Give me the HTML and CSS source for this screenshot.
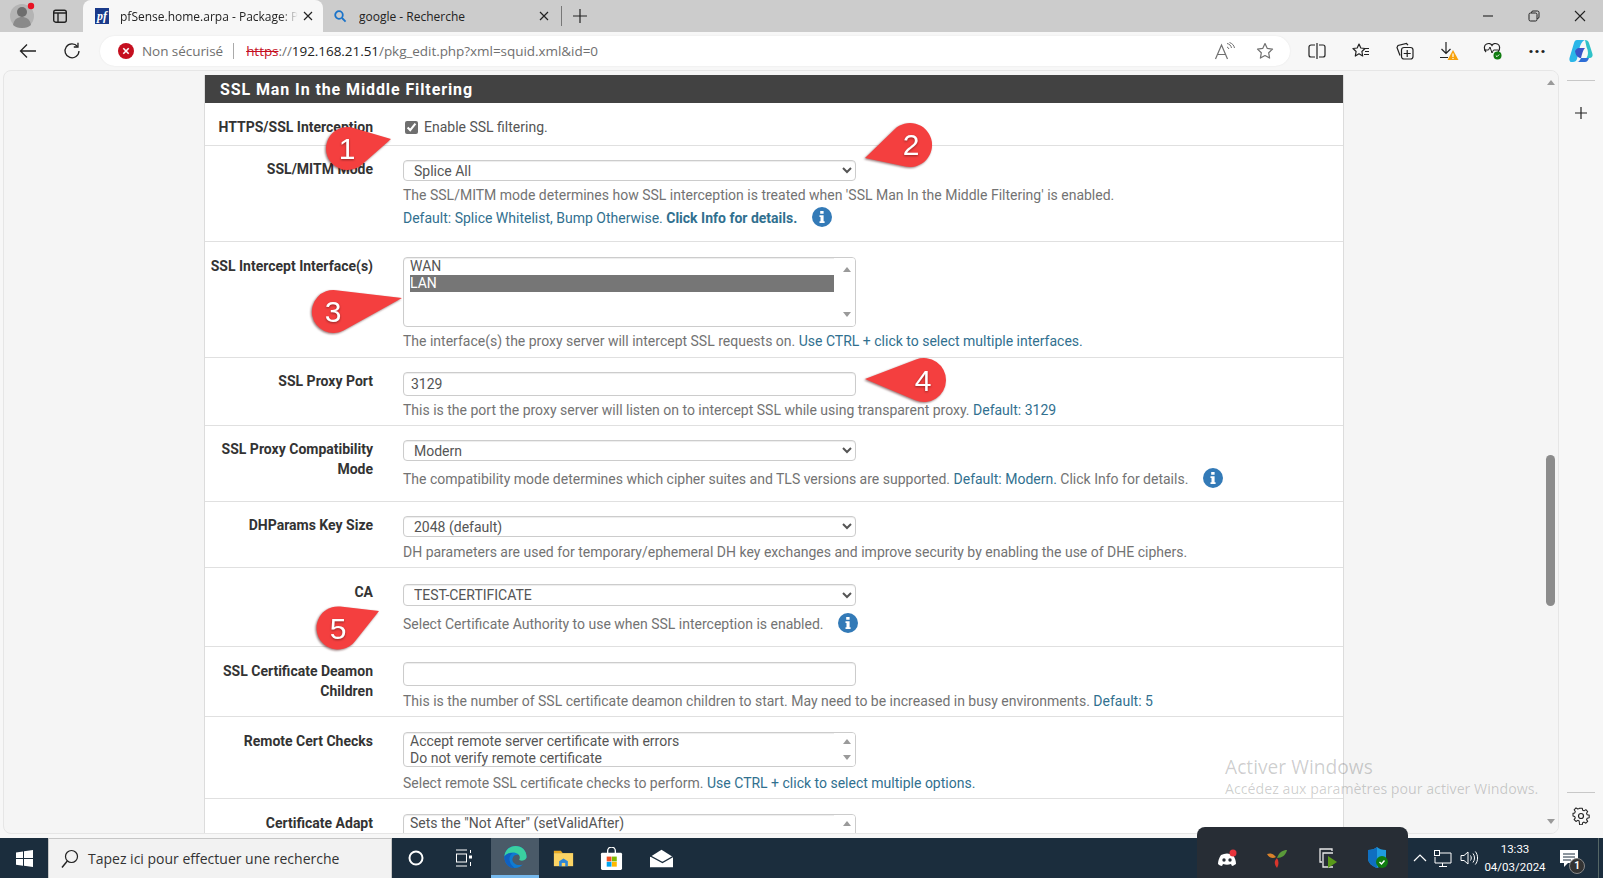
FILE: index.html
```html
<!DOCTYPE html>
<html lang="fr">
<head>
  <meta charset="UTF-8">
  <title>pfSense.home.arpa - Package: Proxy Server</title>
  <link rel="stylesheet" href="styles.css">
</head>
<body>
  <!-- Browser tabs -->
  <header class="tabstrip">
    <span class="strip-btn avatar">
      <svg width="28" height="28" viewBox="0 0 28 28"><circle cx="13" cy="14" r="12" fill="#b4b4b4"/><circle cx="13" cy="10" r="5" fill="#6e6e6e"/><path d="M4 23c1-6 5-8 9-8s8 2 9 8c-2 2-5 3-9 3s-7-1-9-3z" fill="#8a8a8a"/><circle cx="22" cy="4" r="3.2" fill="#e81123"/></svg>
    </span>
    <span class="strip-btn tabs-btn">
      <svg width="16" height="16" viewBox="0 0 16 16"><rect x="1.7" y="2.2" width="12.6" height="12" rx="2" fill="none" stroke="#222" stroke-width="1.4"/><path d="M1.7 5h12.6M6 5v9" stroke="#222" stroke-width="1.4"/></svg>
    </span>
    <div class="tab tab-active">
      <span class="favicon-pf">pf</span>
      <span class="tab-title">pfSense.home.arpa - Package: Proxy Server</span>
      <svg class="tab-close" width="10" height="10" viewBox="0 0 10 10"><path d="M1 1l8 8M9 1l-8 8" stroke="#222" stroke-width="1.2"/></svg>
    </div>
    <div class="tab tab-other">
      <svg width="14" height="14" viewBox="0 0 14 14"><circle cx="6" cy="6" r="3.8" fill="none" stroke="#1a73c9" stroke-width="1.8"/><path d="M9 9l3.6 3.6" stroke="#1a73c9" stroke-width="1.8"/></svg>
      <span class="tab-title">google - Recherche</span>
      <svg class="tab-close" width="10" height="10" viewBox="0 0 10 10"><path d="M1 1l8 8M9 1l-8 8" stroke="#222" stroke-width="1.2"/></svg>
    </div>
    <span class="tab-sep"></span>
    <svg class="new-tab" width="14" height="14" viewBox="0 0 14 14"><path d="M7 0v14M0 7h14" stroke="#222" stroke-width="1.2"/></svg>
    <div class="win-controls">
      <svg width="12" height="12" viewBox="0 0 12 12"><path d="M1 6h10" stroke="#222" stroke-width="1.1"/></svg>
      <svg width="12" height="12" viewBox="0 0 12 12"><rect x="1" y="3" width="8" height="8" rx="1.5" fill="none" stroke="#222"/><path d="M3.5 3V2.5A1.5 1.5 0 0 1 5 1h4.5A1.5 1.5 0 0 1 11 2.500V7a1.500 1.500 0 0 1-1.500 1.500H9" fill="none" stroke="#222"/></svg>
      <svg width="12" height="12" viewBox="0 0 12 12"><path d="M1 1l10 10M11 1L1 11" stroke="#222" stroke-width="1.1"/></svg>
    </div>
  </header>

  <!-- Address bar and toolbar -->
  <nav class="toolbar">
    <svg class="nav-back" width="18" height="16" viewBox="0 0 18 16"><path d="M17 8H1.500M8 1.500L1.500 8 8 14.500" fill="none" stroke="#222" stroke-width="1.300"/></svg>
    <svg class="nav-reload" width="18" height="18" viewBox="0 0 18 18"><path d="M14.500 4.500A7 7 0 1 0 16 9" fill="none" stroke="#222" stroke-width="1.300"/><path d="M15 .8v4.200h-4.200" fill="none" stroke="#222" stroke-width="1.300"/></svg>
    <div class="omnibox">
      <svg width="16" height="16" viewBox="0 0 16 16"><circle cx="8" cy="8" r="8" fill="#c50f1f"/><path d="M5.300 5.300l5.400 5.400M10.700 5.300l-5.400 5.400" stroke="#fff" stroke-width="1.600"/></svg>
      <span class="not-secure">Non sécurisé</span>
      <span class="omni-sep"></span>
      <span class="url"><s class="url-scheme">https</s>://<span class="url-host">192.168.21.51</span>/pkg_edit.php?xml=squid.xml&amp;id=0</span>
      <svg class="read-aloud" width="22" height="18" viewBox="0 0 22 18"><path d="M1.500 17L7.500 3l6 14M3.500 12.500h8" fill="none" stroke="#707070" stroke-width="1.200"/><path d="M13 1.500c2.500.5 4 2 4.500 4.500M13 5c1 .3 1.600 1 1.900 2M15.500 .5c2.800 1 4.500 2.800 5 5.500" fill="none" stroke="#707070"/></svg>
      <svg class="omni-star" width="18" height="18" viewBox="0 0 18 18"><path d="M9 1.500l2.300 4.900 5.200.7-3.800 3.700.9 5.300L9 13.500l-4.600 2.600.9-5.300L1.500 7.100l5.200-.7z" fill="none" stroke="#707070" stroke-width="1.200" stroke-linejoin="round"/></svg>
    </div>
    <div class="toolbar-icons">
      <svg width="18" height="16" viewBox="0 0 18 16"><path d="M7 2H3a2 2 0 0 0-2 2v8a2 2 0 0 0 2 2h4M11 2h4a2 2 0 0 1 2 2v8a2 2 0 0 1-2 2h-4M9 0v16" fill="none" stroke="#222" stroke-width="1.200"/></svg>
      <svg width="18" height="18" viewBox="0 0 18 18"><path d="M7 2l1.800 4 4.200.5-3.100 3 .8 4.500L7 11.800 3.300 14l.8-4.500L1 6.500 5.200 6z" fill="none" stroke="#222" stroke-width="1.200" stroke-linejoin="round"/><path d="M12 6.500h5M13 9.500h4M12 12.500h5" stroke="#222" stroke-width="1.200"/></svg>
      <svg width="18" height="18" viewBox="0 0 18 18"><rect x="5.500" y="5.500" width="11.500" height="11.500" rx="2.500" fill="none" stroke="#222" stroke-width="1.200"/><path d="M11.200 8v7M7.700 11.500h7M12 3.200L10.500 1.500 2 3.500l-1 2 3 8" fill="none" stroke="#222" stroke-width="1.200"/></svg>
      <svg width="20" height="20" viewBox="0 0 20 20"><path d="M7 1v11M2.500 8L7 12.500 11.500 8M1 16.500h8" fill="none" stroke="#222" stroke-width="1.200"/><path d="M14 9l5.500 10h-11z" fill="#f7a10a"/><path d="M14 12.500v3.500M14 17v1" stroke="#fff" stroke-width="1.200"/></svg>
      <svg width="20" height="18" viewBox="0 0 20 18"><path d="M3 10C.5 7 1 3 3.500 2c2-1 4.500-.5 5.500 1.500C10 1.500 12.500 1 14.500 2c2.500 1 3 5 .5 8" fill="none" stroke="#222" stroke-width="1.200"/><path d="M1 8h4.500L7 5l2 6 1.500-3H15" fill="none" stroke="#222"/><circle cx="14.500" cy="13.500" r="4" fill="#107c10"/><path d="M12.800 13.500l1.200 1.200 2.200-2.200" fill="none" stroke="#fff"/></svg>
      <span class="dots">···</span>
      <svg width="24" height="24" viewBox="0 0 24 24"><path d="M8 1h8c-3 1-5 5-6 10l-2 9c-.5 2-2 3-4 3H2C1 23 0 21 .5 19L5 4c.5-2 1.500-3 3-3z" fill="#2bb6e8"/><path d="M16 1c2 0 3.500 1 4 3l3.500 11c.5 2-.5 4-3 4h-3c2-3 2-7 0-11z" fill="#2fc2c8"/><path d="M8 23h8c2 0 3-1.500 4-4h-8c-1 2-2 4-4 4z" fill="#2d6dd6"/><path d="M6 12c2-4 5-3 7-3l3 0c-2 2-3 6-4 10-2 0-5-1-6-7z" fill="#3a55c8"/></svg>
    </div>
  </nav>

  <div class="main">
    <div class="content">
      <div class="page">
        <section class="panel">
          <h2 class="panel-title">SSL Man In the Middle Filtering</h2>
          <div class="panel-body">

            <div class="row row-check">
              <div class="row-label">HTTPS/SSL Interception</div>
              <label class="check-label"><input type="checkbox" class="check" checked> Enable SSL filtering.</label>
            </div>

            <div class="row row-mode">
              <div class="row-label">SSL/MITM Mode</div>
              <div class="row-field">
                <select class="field"><option>Splice All</option></select>
                <p class="help">The SSL/MITM mode determines how SSL interception is treated when 'SSL Man In the Middle Filtering' is enabled.</p>
                <p class="help help-next"><span class="info-text">Default: Splice Whitelist, Bump Otherwise. <b>Click Info for details.</b></span>
                  <svg class="info" width="20" height="20" viewBox="0 0 20 20"><circle cx="10" cy="10" r="10" fill="#337ab7"/><path d="M8.200 4h3.400v2.800H8.200zM7.500 8.300h4.100v6h1v1.800H7.500v-1.800h1v-4.200h-1z" fill="#fff"/></svg></p>
              </div>
            </div>

            <div class="row row-iface">
              <div class="row-label">SSL Intercept Interface(s)</div>
              <div class="row-field">
                <div class="listbox listbox-big">
                  <div class="list-items">
                    <div class="list-item">WAN</div>
                    <div class="list-item list-item-selected">LAN</div>
                  </div>
                  <div class="list-scroll"><span class="arrow-up"></span><span class="arrow-down"></span></div>
                </div>
                <p class="help">The interface(s) the proxy server will intercept SSL requests on. <span class="info-text">Use CTRL + click to select multiple interfaces.</span></p>
              </div>
            </div>

            <div class="row">
              <div class="row-label">SSL Proxy Port</div>
              <div class="row-field">
                <input class="field field-input" type="text" value="3129">
                <p class="help">This is the port the proxy server will listen on to intercept SSL while using transparent proxy. <span class="info-text">Default: 3129</span></p>
              </div>
            </div>

            <div class="row row-info">
              <div class="row-label">SSL Proxy Compatibility Mode</div>
              <div class="row-field">
                <select class="field"><option>Modern</option></select>
                <p class="help">The compatibility mode determines which cipher suites and TLS versions are supported. <span class="info-text">Default: Modern.</span> Click Info for details.
                  <svg class="info" width="20" height="20" viewBox="0 0 20 20"><circle cx="10" cy="10" r="10" fill="#337ab7"/><path d="M8.200 4h3.400v2.800H8.200zM7.500 8.300h4.100v6h1v1.800H7.500v-1.800h1v-4.200h-1z" fill="#fff"/></svg></p>
              </div>
            </div>

            <div class="row">
              <div class="row-label">DHParams Key Size</div>
              <div class="row-field">
                <select class="field"><option>2048 (default)</option></select>
                <p class="help">DH parameters are used for temporary/ephemeral DH key exchanges and improve security by enabling the use of DHE ciphers.</p>
              </div>
            </div>

            <div class="row row-ca">
              <div class="row-label">CA</div>
              <div class="row-field">
                <select class="field field-tall"><option>TEST-CERTIFICATE</option></select>
                <p class="help">Select Certificate Authority to use when SSL interception is enabled.
                  <svg class="info" width="20" height="20" viewBox="0 0 20 20"><circle cx="10" cy="10" r="10" fill="#337ab7"/><path d="M8.200 4h3.400v2.800H8.200zM7.500 8.300h4.100v6h1v1.800H7.500v-1.800h1v-4.200h-1z" fill="#fff"/></svg></p>
              </div>
            </div>

            <div class="row row-low">
              <div class="row-label">SSL Certificate Deamon Children</div>
              <div class="row-field">
                <input class="field field-input" type="text">
                <p class="help">This is the number of SSL certificate deamon children to start. May need to be increased in busy environments. <span class="info-text">Default: 5</span></p>
              </div>
            </div>

            <div class="row row-low">
              <div class="row-label">Remote Cert Checks</div>
              <div class="row-field">
                <div class="listbox listbox-small">
                  <div class="list-items">
                    <div class="list-item">Accept remote server certificate with errors</div>
                    <div class="list-item">Do not verify remote certificate</div>
                  </div>
                  <div class="list-scroll list-scroll-small"><span class="arrow-up"></span><span class="arrow-down"></span></div>
                </div>
                <p class="help">Select remote SSL certificate checks to perform. <span class="info-text">Use CTRL + click to select multiple options.</span></p>
              </div>
            </div>

            <div class="row row-low">
              <div class="row-label">Certificate Adapt</div>
              <div class="row-field">
                <div class="listbox listbox-small">
                  <div class="list-items">
                    <div class="list-item">Sets the "Not After" (setValidAfter)</div>
                    <div class="list-item">Sets the "Not Before" (setValidBefore)</div>
                  </div>
                  <div class="list-scroll list-scroll-small"><span class="arrow-up"></span><span class="arrow-down"></span></div>
                </div>
              </div>
            </div>

          </div>
        </section>
      </div>
      <div class="page-scroll">
        <span class="arrow-up"></span>
        <span class="scroll-thumb"></span>
        <span class="arrow-down"></span>
      </div>
    </div>

    <aside class="sidebar">
      <span class="side-rule"></span>
      <svg class="side-plus" width="14" height="14" viewBox="0 0 14 14"><path d="M7 1v12M1 7h12" stroke="#222" stroke-width="1.200"/></svg>
      <span class="side-rule side-rule-bottom"></span>
      <svg width="18" height="18" viewBox="0 0 18 18"><path d="M7.500 1h3l.5 2.300 1.600.7 2-1.300 2.100 2.100-1.300 2 .7 1.600 2.300.5v3l-2.300.5-.7 1.600 1.300 2-2.100 2.100-2-1.300-1.600.7-.5 2.300h-3L7 15.500 5.400 14.800l-2 1.300-2.100-2.100 1.300-2L1.900 10.400 0 9.900v-3l2-.5.600-1.600-1.300-2L3.400 .7l2 1.300L7 1.300z" transform="translate(1 .3) scale(.88)" fill="none" stroke="#222" stroke-width="1.200" stroke-linejoin="round"/><circle cx="9" cy="9" r="2.500" fill="none" stroke="#222" stroke-width="1.200"/></svg>
    </aside>
  </div>

  <!-- Windows taskbar -->
  <footer class="taskbar">
    <span class="start">
      <svg width="17" height="17" viewBox="0 0 17 17"><path d="M0 2.400L7 1.400v6.700H0zM8 1.300L17 0v8.100H8zM0 9h7v6.700L0 14.700zM8 9h9v8L8 15.800z" fill="#fff"/></svg>
    </span>
    <div class="searchbox">
      <svg width="18" height="20" viewBox="0 0 18 20"><circle cx="10.500" cy="7.500" r="6" fill="none" stroke="#222" stroke-width="1.200"/><path d="M6.300 12L1 18.500" stroke="#222" stroke-width="1.400"/></svg>
      <span>Tapez ici pour effectuer une recherche</span>
    </div>
    <span class="task-item">
      <svg width="16" height="16" viewBox="0 0 16 16"><circle cx="8" cy="8" r="6.500" fill="none" stroke="#fff" stroke-width="2"/></svg>
    </span>
    <span class="task-item">
      <svg width="18" height="18" viewBox="0 0 18 18"><path d="M1 1h11M1 17h11" stroke="#fff"/><rect x="1.500" y="5" width="10" height="8" fill="none" stroke="#fff"/><path d="M15.500 1v3M15.500 13v4" stroke="#fff"/><rect x="14" y="6.500" width="3" height="3" fill="#fff"/></svg>
    </span>
    <span class="task-item task-item-active">
      <svg width="25" height="24" viewBox="0 0 26 26"><path d="M25 14c0-8-5-13-12-13C6 1 1 6 1 13c0 7 5 12 11 12 4 0 7-2 9-4-3 1-7 1-9-1-2-1-3-4-2-6 1-3 4-4 7-3 3 0 5 2 8 3z" fill="#0f7bd1"/><path d="M1 12C2 5 7 1 13 1c7 0 12 5 12 12 0 2-2 4-5 4-2 0-3-1-3-1 1-2 1-4-1-6-4-3-11-2-15 2z" fill="#3ad0a0"/><path d="M1 13c2-3 5-5 9-4-4 2-5 8-1 13 1 1 2 2 3 3-6 0-11-5-11-12z" fill="#1060c0"/></svg>
    </span>
    <span class="task-item">
      <svg width="21" height="18" viewBox="0 0 24 22" preserveAspectRatio="none"><path d="M1 2h8l2 3h-10z" fill="#e8a820"/><rect x="1" y="5" width="22" height="16" fill="#fcd464"/><path d="M7 21v-6l5-3.500L17 15v6z" fill="#2e86d6"/><rect x="10" y="17" width="4" height="4" fill="#fcd464"/></svg>
    </span>
    <span class="task-item">
      <svg width="23" height="23" viewBox="0 0 24 24"><path d="M8 7V4a4 4 0 0 1 8 0v3" fill="none" stroke="#fff" stroke-width="1.400"/><rect x="1" y="6" width="22" height="18" rx="1.500" fill="#fff"/><rect x="7" y="10" width="5" height="5" fill="#f25022"/><rect x="12.500" y="10" width="5" height="5" fill="#7fba00"/><rect x="7" y="15.500" width="5" height="5" fill="#00a4ef"/><rect x="12.500" y="15.500" width="5" height="5" fill="#ffb900"/></svg>
    </span>
    <span class="task-item task-item-mail">
      <svg width="23" height="19" viewBox="0 0 24 24" preserveAspectRatio="none"><path d="M12 1l12 9v13H0V10z" fill="#fff"/><path d="M0 8.500L13 17l11-7.500" fill="none" stroke="#1b2d3d" stroke-width="1.500"/><path d="M0 10l9 7-9 6z" fill="#fff"/></svg>
    </span>
    <div class="tray">
      <svg class="tray-chevron" width="14" height="8" viewBox="0 0 14 8"><path d="M1 7l6-6 6 6" fill="none" stroke="#fff" stroke-width="1.200"/></svg>
      <svg class="tray-network" width="18" height="17" viewBox="0 0 18 17"><path d="M5 3h12v10H1V7" fill="none" stroke="#fff"/><rect x=".5" y=".5" width="5" height="5" fill="none" stroke="#fff"/><path d="M8.500 13v3M5 16.500h8" stroke="#fff"/></svg>
      <svg class="tray-volume" width="18" height="16" viewBox="0 0 18 16"><path d="M1 5.500h3L8 2v12L4 10.500H1z" fill="none" stroke="#fff"/><path d="M10.500 5.500c1 1.500 1 3.500 0 5M13 3.500c2 2.500 2 6.500 0 9M15.300 1.500c3 3.500 3 9.500 0 13" fill="none" stroke="#fff"/></svg>
      <div class="clock"><span>13:33</span><span>04/03/2024</span></div>
      <span class="notif">
        <svg width="18" height="17" viewBox="0 0 18 17"><path d="M0 0h18v13H8l-4 4v-4H0z" fill="#fff"/><path d="M3 4h12M3 7h12M3 10h8" stroke="#1b2d3d"/></svg>
        <span class="notif-badge">1</span>
      </span>
      <span class="show-desktop"></span>
    </div>
  </footer>

  <!-- Items lying over the page -->
  <div class="watermark">
    <div class="watermark-title">Activer Windows</div>
    <div>Accédez aux paramètres pour activer Windows.</div>
  </div>

  <div class="tray-popup">
    <svg width="20" height="18" viewBox="0 0 20 18"><path d="M4 6c4-2 8-2 12 0 2 3 3 6 3 9-2 1-3 2-4 2l-1-2c-3 1-5 1-8 0l-1 2c-1 0-3-1-4-2 0-3 1-6 3-9z" fill="#fff"/><circle cx="7" cy="11" r="1.700" fill="#272d35"/><circle cx="13" cy="11" r="1.700" fill="#272d35"/><circle cx="16" cy="4" r="3.500" fill="#e8343c"/></svg>
    <svg width="20" height="20" viewBox="0 0 20 20"><path d="M10 10C12 4 16 2 20 2c-1 5-5 8-10 8z" fill="#5a9a3a"/><path d="M9 9C6 5 3 5 0 6c2 4 6 5 9 3z" fill="#d9822b"/><path d="M10 10c-3 3-3 6 0 10 2-3 2-7 0-10z" fill="#d8352c"/></svg>
    <svg width="20" height="20" viewBox="0 0 20 20"><path d="M14 3V1H2v13h2" fill="none" stroke="#e8e8e8" stroke-width="1.300"/><path d="M15 5H5v14h10" fill="none" stroke="#e8e8e8" stroke-width="1.300"/><path d="M10 8l9 6-9 6z" fill="#5a9a1a"/></svg>
    <svg width="20" height="22" viewBox="0 0 20 22"><path d="M9 0c2 2 5 3 9 3v8c0 5-4 8-9 10-5-2-9-5-9-10V3c4 0 7-1 9-3z" fill="#1f9ce0"/><path d="M9 0v21C4 19 0 16 0 11V3c4 0 7-1 9-3z" fill="#0f6fc0"/><circle cx="14" cy="15" r="6" fill="#107c10"/><path d="M11.500 15l2 2 3-3.500" fill="none" stroke="#fff" stroke-width="1.400"/></svg>
  </div>

  <svg class="callouts" width="1603" height="878" viewBox="0 0 1603 878">
    <path class="callout" d="M391 139L353.600 127.900A21.500 21.500 0 1 0 361.700 164.700Z"/>
    <text class="callout-num" x="347" y="159">1</text>
    <path class="callout" d="M865 158L894.700 129.200A22 22 0 1 1 905.500 166.500Z"/>
    <text class="callout-num" x="911" y="155">2</text>
    <path class="callout" d="M402 298L336 290.200A21.500 21.500 0 1 0 343.900 330.300Z"/>
    <text class="callout-num" x="333" y="322">3</text>
    <path class="callout" d="M865 379L916.100 359.500A22 22 0 1 1 915.400 400.300Z"/>
    <text class="callout-num" x="923" y="391">4</text>
    <path class="callout" d="M379 611L340.400 606.600A21.500 21.500 0 1 0 354.800 641.400Z"/>
    <text class="callout-num" x="338" y="639">5</text>
  </svg>
</body>
</html>
```

FILE: styles.css
```css
/* Page frame */
* {
  box-sizing: border-box;
}

body {
  margin: 0;
  width: 1603px;
  height: 878px;
  display: flex;
  flex-direction: column;
  overflow: hidden;
  position: relative;
  font-family: Roboto, "Liberation Sans", sans-serif;
  background-color: #f7f7f7;
}

/* Tab strip */
.tabstrip {
  height: 32px;
  flex: none;
  display: flex;
  align-items: center;
  background-color: #cccccc;
  font-family: "Open Sans", "Liberation Sans", sans-serif;
  font-size: 12px;
  color: #222;
}

.strip-btn {
  display: flex;
  align-items: center;
  justify-content: center;
}

.avatar {
  width: 28px;
  margin-left: 9px;
}

.tabs-btn {
  width: 16px;
  margin-left: 15px;
  margin-right: 15px;
}

.tab {
  height: 32px;
  display: flex;
  align-items: center;
  width: 240px;
}

.tab-active {
  background-color: #f7f7f7;
  border-radius: 8px 8px 0 0;
  padding: 0 10px 0 12px;
}

.tab-other {
  padding: 0 10px 0 10px;
  width: 236px;
}

.favicon-pf {
  width: 14px;
  height: 16px;
  flex: none;
  background-color: #1a3a8a;
  color: #fff;
  font-family: "Liberation Serif", serif;
  font-style: italic;
  font-weight: bold;
  font-size: 12px;
  line-height: 16px;
  text-align: center;
}

.tab-title {
  flex: 1;
  margin-left: 11px;
  white-space: nowrap;
  overflow: hidden;
}

.tab-other .tab-title {
  margin-left: 12px;
}

.tab-active .tab-title {
  color: #222;
  -webkit-mask-image: linear-gradient(to right, #000 90%, transparent 100%);
  mask-image: linear-gradient(to right, #000 90%, transparent 100%);
}

.tab-close {
  flex: none;
  margin-left: 5px;
}

.tab-sep {
  width: 1px;
  height: 20px;
  background-color: #777;
  margin-left: 2px;
}

.new-tab {
  margin-left: 11px;
}

.win-controls {
  margin-left: auto;
  display: flex;
  gap: 34px;
  padding-right: 17px;
}

/* Toolbar */
.toolbar {
  height: 38px;
  flex: none;
  display: flex;
  align-items: center;
  background-color: #f7f7f7;
}

.nav-back {
  margin-left: 19px;
}

.nav-reload {
  margin-left: 26px;
}

.omnibox {
  width: 1191px;
  height: 30px;
  margin-left: 19px;
  background-color: #fff;
  border-radius: 15px;
  display: flex;
  align-items: center;
  padding-left: 18px;
  font-family: "Open Sans", "Liberation Sans", sans-serif;
  font-size: 13.500px;
  letter-spacing: -0.05px;
  color: #707070;
  box-shadow: 0 0 2px rgba(0, 0, 0, 0.08);
}

.not-secure {
  margin-left: 8px;
}

.omni-sep {
  width: 1px;
  height: 16px;
  background-color: #aaa;
  margin: 0 12px 0 10px;
}

.url-scheme {
  color: #c50f1f;
}

.url-host {
  color: #222;
}

.read-aloud {
  margin-left: auto;
}

.omni-star {
  margin-left: 20px;
  margin-right: 16px;
}

.toolbar-icons {
  margin-left: 5px;
  display: grid;
  grid-template-columns: repeat(7, 44px);
  justify-items: center;
  align-items: center;
}

.dots {
  font-size: 20px;
  font-weight: bold;
  color: #222;
  line-height: 16px;
}

/* Main area */
.main {
  flex: 1;
  min-height: 0;
  display: flex;
  background-color: #f7f7f7;
}

.content {
  width: 1556px;
  margin-left: 3px;
  height: 764px;
  display: flex;
  background-color: #f5f5f5;
  border: 1px solid #e6e6e6;
  border-radius: 8px;
  overflow: hidden;
}

.page {
  flex: 1;
  min-width: 0;
  padding: 4px 0 0 200px;
  overflow: hidden;
}

.panel {
  width: 1140px;
  background-color: #fff;
  border-left: 1px solid #dcdcdc;
  border-right: 1px solid #dcdcdc;
}

.panel-title {
  margin: 0;
  height: 28px;
  background-color: #424242;
  color: #fff;
  font-size: 16px;
  font-weight: 700;
  line-height: 29px;
  letter-spacing: 0.9px;
  padding-left: 15px;
}

/* Form rows */
.row {
  display: grid;
  grid-template-columns: 168px 453px;
  column-gap: 30px;
  padding: 14px 0 5px;
  border-bottom: 1px solid #e0e0e0;
  font-size: 14px;
  line-height: 20px;
  color: #737373;
}

.row-label {
  margin-top: -1px;
  color: #333;
  font-weight: 700;
  text-align: right;
}

.row-check {
  padding: 14px 0 8px;
}

.row-check .row-label {
  margin-top: 0;
}

.row-mode {
  padding-bottom: 13px;
}

.row-iface {
  padding: 15px 0 6px;
}

.row-info {
  padding-bottom: 12px;
}

.row-ca {
  padding: 16px 0 12px;
}

.row-ca .row-label {
  margin-top: -2px;
}

.row-low {
  padding-top: 15px;
}

.row-field {
  min-width: 0;
  white-space: nowrap;
}

.check-label {
  display: flex;
  align-items: center;
  color: #555;
}

.check {
  width: 13px;
  height: 13px;
  margin: 0 6px 0 2px;
  accent-color: #6f6f6f;
}

.field {
  display: block;
  width: 453px;
  height: 21px;
  padding: 0 4px 0 6px;
  border: 1px solid #ccc;
  border-radius: 4px;
  background-color: #fff;
  color: #555;
  font-family: inherit;
  font-size: 14px;
  box-shadow: inset 0 1px 1px rgba(0, 0, 0, 0.075);
}

.field-tall {
  height: 22px;
}

.field-input {
  height: 24px;
  padding: 0 7px;
  outline: none;
}

.help {
  margin: 5px 0 0;
}

.field-input + .help,
.row-iface .help {
  margin-top: 4px;
}

.row-low .field-input + .help {
  margin-top: 5px;
}

.row-low .listbox + .help {
  margin-top: 6px;
}

.row-info .help,
.row-ca .help {
  margin-top: 8px;
}

.row-mode .help {
  margin-top: 4px;
}

.row-mode .help-next {
  margin-top: 3px;
}

.info-text {
  color: #31708f;
}

.info {
  margin: -4px 0 -4px 11px;
  vertical-align: 0;
}

/* Multi-line list boxes */
.listbox {
  display: flex;
  width: 453px;
  border: 1px solid #ccc;
  border-radius: 4px;
  background-color: #fff;
  box-shadow: inset 0 1px 1px rgba(0, 0, 0, 0.075);
  overflow: hidden;
  font-size: 14px;
  line-height: 17px;
  color: #555;
}

.listbox-big {
  height: 70px;
}

.listbox-small {
  height: 35px;
}

.list-items {
  flex: 1;
  padding: 0 0 0 6px;
}

.list-item {
  height: 17px;
  white-space: nowrap;
}

.list-item-selected {
  background-color: #767676;
  color: #fff;
}

.list-scroll {
  width: 21px;
  flex: none;
  padding: 9px 6px 9px 11px;
  background-color: #fff;
  display: flex;
  flex-direction: column;
  justify-content: space-between;
  align-items: center;
}

.list-scroll-small {
  padding: 6px 6px 6px 11px;
}

.arrow-up {
  width: 0;
  height: 0;
  flex: none;
  border-left: 4px solid transparent;
  border-right: 4px solid transparent;
  border-bottom: 5px solid #9a9a9a;
}

.arrow-down {
  width: 0;
  height: 0;
  flex: none;
  border-left: 4px solid transparent;
  border-right: 4px solid transparent;
  border-top: 5px solid #9a9a9a;
}

/* Page scrollbar */
.page-scroll {
  width: 15px;
  flex: none;
  display: flex;
  flex-direction: column;
  align-items: center;
  padding: 9px 0;
  background-color: #f5f5f5;
}

.scroll-thumb {
  width: 9px;
  height: 151px;
  border-radius: 5px;
  background-color: #8c8c8c;
  margin-top: 370px;
  margin-bottom: auto;
}

/* Edge sidebar */
.sidebar {
  flex: 1;
  display: flex;
  flex-direction: column;
  align-items: center;
  padding-top: 10px;
  height: 764px;
  padding-bottom: 9px;
}

.side-rule {
  width: 28px;
  height: 1px;
  background-color: #c8c8c8;
  flex: none;
}

.side-plus {
  margin-top: 25px;
}

.side-rule-bottom {
  margin-top: auto;
  margin-bottom: 14px;
}

/* Taskbar */
.taskbar {
  height: 40px;
  flex: none;
  display: flex;
  align-items: center;
  background-color: #1b2d3d;
  color: #fff;
}

.start {
  width: 48px;
  height: 40px;
  display: flex;
  align-items: center;
  justify-content: center;
}

.searchbox {
  width: 344px;
  height: 40px;
  background-color: #f2f2f2;
  border: 1px solid #c6c6c6;
  border-bottom: none;
  display: flex;
  align-items: center;
  padding-left: 12px;
  color: #333;
  font-family: "Open Sans", "Liberation Sans", sans-serif;
  font-size: 14px;
}

.searchbox span {
  margin-left: 9px;
}

.task-item {
  width: 48px;
  height: 40px;
  display: flex;
  align-items: center;
  justify-content: center;
}

.task-item-active {
  margin-left: 3px;
  background-color: #4a5a68;
  border-bottom: 3px solid #76b9ed;
}

.task-item-mail {
  margin-left: 2px;
}

.tray {
  margin-left: auto;
  display: flex;
  align-items: center;
  height: 40px;
}

.tray-chevron {
  margin-right: 7px;
}

.tray-network {
  margin-right: 8px;
}

.tray-volume {
  margin-right: 2px;
}

.clock {
  width: 70px;
  display: flex;
  flex-direction: column;
  align-items: center;
  font-size: 11.500px;
  line-height: 18px;
}

.notif {
  position: relative;
  width: 18px;
  margin-left: 10px;
  margin-right: 20px;
  display: flex;
}

.notif-badge {
  position: absolute;
  right: -7px;
  bottom: -7px;
  width: 16px;
  height: 16px;
  border-radius: 50%;
  background-color: #333;
  border: 1px solid #888;
  font-size: 10px;
  font-weight: bold;
  line-height: 14px;
  text-align: center;
}

.show-desktop {
  width: 1px;
  height: 40px;
  margin-right: 4px;
  background-color: #566;
}

/* Overlays */
.watermark {
  position: absolute;
  left: 1225px;
  top: 755px;
  font-family: "Open Sans", "Liberation Sans", sans-serif;
  font-size: 14.200px;
  line-height: 20px;
  color: rgba(0, 0, 0, 0.2);
  white-space: nowrap;
}

.watermark-title {
  font-size: 19.200px;
  line-height: 24px;
}

.tray-popup {
  position: absolute;
  left: 1197px;
  top: 827px;
  width: 211px;
  height: 51px;
  background-color: #272d35;
  border-radius: 8px 8px 0 0;
  display: flex;
  align-items: center;
  justify-content: space-between;
  padding: 10px 20px 0 20px;
}

.callouts {
  position: absolute;
  left: 0;
  top: 0;
  pointer-events: none;
}

.callout {
  fill: #f43f3f;
  filter: drop-shadow(-1px 1px 1px rgba(60, 0, 0, 0.55));
}

.callout-num {
  fill: #fff;
  font-family: "Liberation Sans", sans-serif;
  font-size: 30px;
  text-anchor: middle;
  filter: drop-shadow(0 1px 1px rgba(0, 0, 0, 0.4));
}
```
